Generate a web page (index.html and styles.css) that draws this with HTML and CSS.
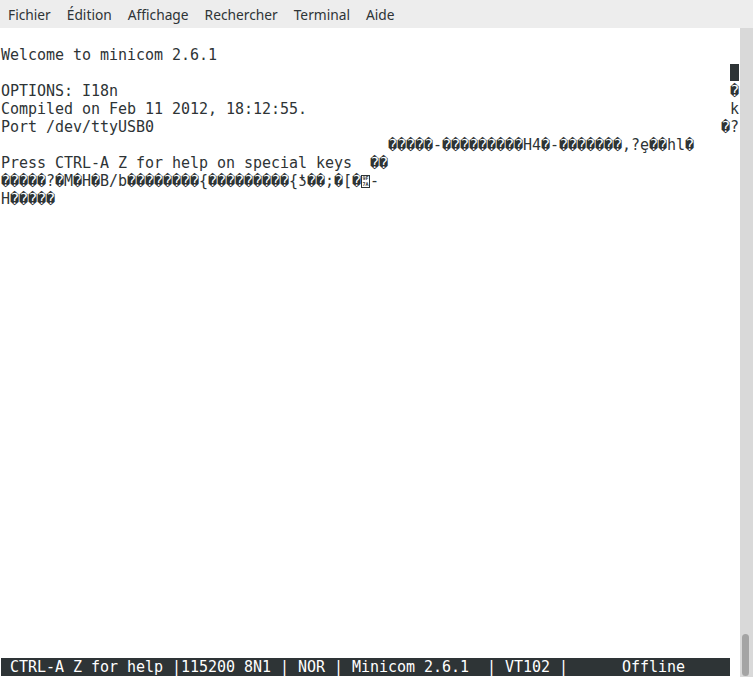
FILE: index.html
```html
<!DOCTYPE html>
<html lang="fr">
<head>
    <meta charset="UTF-8">
    <title>minicom - Terminal</title>
    <link rel="stylesheet" href="styles.css">
</head>
<body>
    <div class="window">
        <!-- Barre de menus -->
        <nav class="menubar">
            <span class="menu-item">Fichier</span>
            <span class="menu-item">Édition</span>
            <span class="menu-item">Affichage</span>
            <span class="menu-item">Rechercher</span>
            <span class="menu-item">Terminal</span>
            <span class="menu-item">Aide</span>
        </nav>

        <div class="screen">
            <div class="terminal">
                <div class="line"> </div>
                <div class="line">Welcome to minicom 2.6.1</div>
                <div class="line">                                                                                 <span class="cursor"> </span></div>
                <div class="line">OPTIONS: I18n                                                                    �</div>
                <div class="line">Compiled on Feb 11 2012, 18:12:55.                                               k</div>
                <div class="line">Port /dev/ttyUSB0                                                               �?</div>
                <div class="line">                                           �����-���������H4�-�������,?ȩ��hl�</div>
                <div class="line">Press CTRL-A Z for help on special keys  ��</div>
                <div class="line">�����?�M�H�B/b��������{���������{ƾ��;�[�<span class="hexbox">9F<br>7A</span>-</div>
                <div class="line">H�����</div>
                <div class="filler"></div>
                <!-- Ligne d'état de minicom -->
                <div class="line status-line"><span class="status"> CTRL-A Z for help |115200 8N1 | NOR | Minicom 2.6.1  | VT102 |      Offline     </span></div>
            </div>
            <div class="scrollbar">
                <div class="slider"></div>
            </div>
        </div>
    </div>
</body>
</html>
```

FILE: styles.css
```css
body {
    margin: 0;
    font-family: "Noto Sans", "Open Sans", sans-serif;
    background: #fff;
}
.window {
    height: 677px;
    display: flex;
    flex-direction: column;
    overflow: hidden;
}
.menubar {
    height: 28px;
    flex-shrink: 0;
    background: #ededed;
    display: flex;
    align-items: center;
    font-size: 13.75px;
    color: #2e3436;
}
.menu-item {
    padding: 0 8px;
}
.screen {
    flex: 1;
    display: flex;
    min-height: 0;
}
.terminal {
    flex: 1;
    display: flex;
    flex-direction: column;
    padding-left: 1px;
    font-family: "DejaVu Sans Mono", monospace;
    font-size: 15px;
    line-height: 18px;
    letter-spacing: -0.03px; /* 9px par colonne */
    color: #2e3436;
    white-space: pre;
    overflow: hidden;
}
.line {
    height: 18px;
    flex-shrink: 0;
}
.filler {
    flex: 1;
}
.status-line {
    margin-bottom: 1px;
}
.status {
    display: inline-block;
    height: 18px;
    background: #2e3436;
    color: #fff;
}
.cursor {
    display: inline-block;
    height: 17px;
    background: #2e3436;
}
.hexbox {
    display: inline-block;
    box-sizing: border-box;
    width: 9px;
    height: 13px;
    border: 1px solid #2e3436;
    font-size: 5px;
    font-weight: bold;
    line-height: 5.5px;
    letter-spacing: 0;
    text-align: center;
    vertical-align: -2px;
    overflow: hidden;
}
.scrollbar {
    width: 13px;
    flex-shrink: 0;
    background: #d9d9d9;
    display: flex;
    flex-direction: column;
    justify-content: flex-end;
    padding: 0 4px 1px 2px;
    box-sizing: border-box;
}
.slider {
    height: 42px;
    background: #a4a4a4;
    border-radius: 4px;
}
```
